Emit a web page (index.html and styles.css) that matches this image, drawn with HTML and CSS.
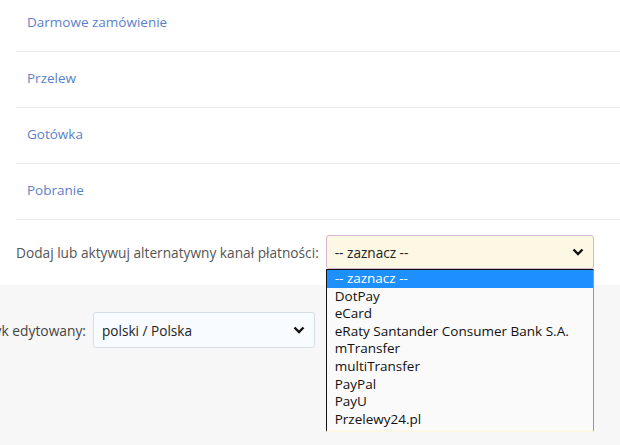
FILE: index.html
```html
<!DOCTYPE html>
<html lang="pl">
<head>
  <meta charset="UTF-8">
  <title>Kanały płatności</title>
  <link rel="stylesheet" href="styles.css">
</head>
<body>
<div class="panel">
  <ul class="methods">
    <li><a href="#">Darmowe zamówienie</a></li>
    <li><a href="#">Przelew</a></li>
    <li><a href="#">Gotówka</a></li>
    <li><a href="#">Pobranie</a></li>
  </ul>
  <div class="add-row">
    <label class="add-label">Dodaj lub aktywuj alternatywny kanał płatności:</label>
    <div class="pick pick-open">
      <span>-- zaznacz --</span>
      <svg class="chev" width="12" height="8" viewBox="0 0 12 8"><path d="M1.5 1.5 L6 6 L10.5 1.5" fill="none" stroke="#111" stroke-width="2.4"/></svg>
      <!-- rozwinięta lista -->
      <ul class="pick-list">
        <li class="on">-- zaznacz --</li>
        <li>DotPay</li>
        <li>eCard</li>
        <li>eRaty Santander Consumer Bank S.A.</li>
        <li>mTransfer</li>
        <li>multiTransfer</li>
        <li>PayPal</li>
        <li>PayU</li>
        <li>Przelewy24.pl</li>
      </ul>
    </div>
  </div>
</div>
<div class="lang-bar">
  <div class="lang-label"><span>Język edytowany:</span></div>
  <div class="pick pick-lang">
    <span>polski / Polska</span>
    <svg class="chev" width="12" height="8" viewBox="0 0 12 8"><path d="M1.5 1.5 L6 6 L10.5 1.5" fill="none" stroke="#111" stroke-width="2.4"/></svg>
  </div>
</div>
</body>
</html>
```

FILE: styles.css
```css
body { margin: 0; font-family: "Open Sans", "Noto Sans", sans-serif; font-size: 13.6px; color: #555; background: #f7f7f7; overflow: hidden; }
.panel { background: #fff; padding-left: 16px; }
.methods { list-style: none; margin: -4px 0 0; padding: 0; font-size: 13.5px; }
.methods li { height: 56px; box-sizing: border-box; padding: 16px 11px 0; line-height: 20px; border-bottom: 1px solid #e8e8e8; }
.methods a { color: #5b7fc8; text-decoration: none; }
.add-row { display: flex; align-items: center; gap: 7px; padding: 15px 0 16px; }
.add-label { color: #555; font-size: 13.7px; }
.pick { position: relative; display: flex; align-items: center; justify-content: space-between; box-sizing: border-box; border-radius: 3px; padding: 0 8px; color: #222; font-size: 13.6px; }
.pick-open { width: 268px; height: 34px; background: #fcf8e3; border: 1px solid #d7b3cf; }
.chev { margin-right: 1px; }
.pick-list { position: absolute; left: -1px; top: 33px; width: 268px; box-sizing: border-box; margin: 0; padding: 0 0 2px; list-style: none; background: #fafafa; border-top: 1px solid #111; border-left: 1px solid #111; border-right: 1px solid #7b9bd2; border-bottom: 2px solid #fcf8e3; z-index: 2; font-size: 13.5px; }
.pick-list li { height: 17.6px; line-height: 17.6px; padding-left: 8px; color: #111; white-space: nowrap; }
.pick-list li.on { background: #1e8fff; color: #fff; }
.lang-bar { display: flex; align-items: flex-start; gap: 7px; padding-top: 27px; height: 134px; }
.lang-label { width: 86px; height: 36px; display: flex; align-items: center; justify-content: flex-end; white-space: nowrap; color: #444; font-size: 13.8px; }
.pick-lang { width: 222px; height: 36px; background: #f8fbff; border: 1px solid #d5dde6; }
```
